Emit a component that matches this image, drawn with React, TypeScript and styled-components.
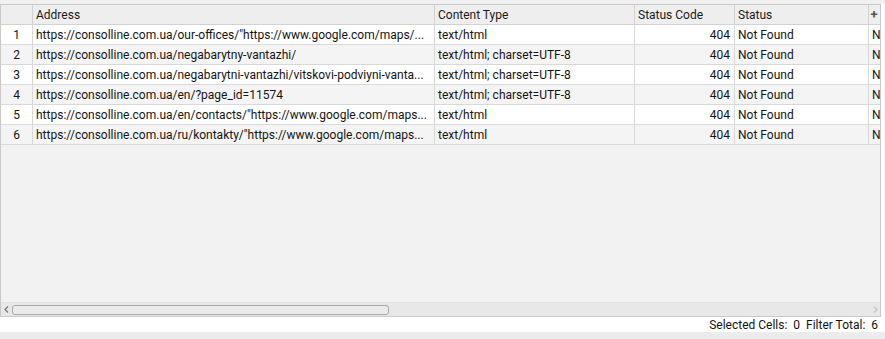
import React from "react";
import styled, { createGlobalStyle } from "styled-components";

const Global = createGlobalStyle`
  html, body { margin: 0; padding: 0; background: #ffffff; }
  body { font-family: Roboto, "Liberation Sans", Arial, sans-serif; font-size: 12px; color: #111; }
  #root { width: 885px; height: 339px; overflow: hidden; }
  * { box-sizing: border-box; }
`;

const Page = styled.div`
  width: 885px;
  height: 339px;
  display: flex;
  flex-direction: column;
  background: #ffffff;
`;

const TopStrip = styled.div`
  height: 4px;
  background: #f0f0f0;
  flex: none;
`;

const Panel = styled.div`
  width: 881px;
  height: 313px;
  border: 1px solid #c9c9c9;
  background: #f2f2f2;
  display: flex;
  flex-direction: column;
  flex: none;
  overflow: hidden;
`;

const Grid = styled.div`
  flex: 1;
  display: flex;
  flex-direction: column;
  min-height: 0;
`;

const cols = "32px 402px 200px 100px 134px minmax(0, 1fr)";

const HeaderRow = styled.div`
  display: grid;
  grid-template-columns: ${cols};
  height: 20px;
  border-bottom: 1px solid #d2d2d2;
  background: #eeeeee;
  flex: none;
`;

const HeaderCell = styled.div`
  border-right: 1px solid #d2d2d2;
  padding: 2px 4px 0 3px;
  line-height: 17px;
  white-space: nowrap;
  overflow: hidden;
  color: #1a1a1a;
  font-size: 12px;
`;

const PlusCell = styled.div`
  display: flex;
  align-items: center;
  justify-content: center;
  padding-right: 1px;
  color: #555;
  font-size: 13px;
  font-weight: 700;
`;

const Row = styled.div<{ $alt: boolean }>`
  display: grid;
  grid-template-columns: ${cols};
  height: 20px;
  border-bottom: 1px solid #d9d9d9;
  background: ${(p) => (p.$alt ? "#f4f4f4" : "#ffffff")};
  flex: none;
`;

const Cell = styled.div<{ $align?: "left" | "right" | "center"; $last?: boolean }>`
  border-right: ${(p) => (p.$last ? "none" : "1px solid #d9d9d9")};
  padding: ${(p) =>
    p.$align === "right" ? "2px 4px 0 3px" : p.$align === "center" ? "2px 0 0 0" : "2px 3px 0 3px"};
  text-align: ${(p) => p.$align ?? "left"};
  line-height: 17px;
  white-space: nowrap;
  overflow: hidden;
  color: #141414;
  font-size: 12px;
`;

const Empty = styled.div`
  flex: 1;
  background: #f2f2f2;
`;

const ScrollBar = styled.div`
  height: 14px;
  background: #e8e8e8;
  border-top: 1px solid #e4e4e4;
  display: flex;
  align-items: center;
  flex: none;
`;

const Arrow = styled.span<{ $right?: boolean }>`
  width: 10px;
  display: flex;
  align-items: center;
  justify-content: center;
  margin-left: ${(p) => (p.$right ? "auto" : "0")};
  margin-right: ${(p) => (p.$right ? "0" : "0")};
`;

const Thumb = styled.div`
  margin-left: 1px;
  width: 377px;
  height: 10px;
  border: 1px solid #a9a9a9;
  border-radius: 3px;
  background: #ebebeb;
`;

const StatusBar = styled.div`
  height: 15px;
  background: #ffffff;
  display: flex;
  justify-content: flex-end;
  align-items: center;
  padding-right: 7px;
  font-size: 12px;
  color: #141414;
  flex: none;
  white-space: pre;
`;

const BottomStrip = styled.div`
  flex: 1;
  background: #ececec;
`;

const rows = [
  ['https://consolline.com.ua/our-offices/"https://www.google.com/maps/...', "text/html"],
  ["https://consolline.com.ua/negabarytny-vantazhi/", "text/html; charset=UTF-8"],
  ["https://consolline.com.ua/negabarytni-vantazhi/vitskovi-podviyni-vanta...", "text/html; charset=UTF-8"],
  ["https://consolline.com.ua/en/?page_id=11574", "text/html; charset=UTF-8"],
  ['https://consolline.com.ua/en/contacts/"https://www.google.com/maps...', "text/html"],
  ['https://consolline.com.ua/ru/kontakty/"https://www.google.com/maps...', "text/html"],
];

const Chevron = ({ dir, color }: { dir: "left" | "right"; color: string }) => (
  <svg width="5" height="7" viewBox="0 0 5 7">
    <polyline
      points={dir === "left" ? "4,0.5 1,3.5 4,6.5" : "1,0.5 4,3.5 1,6.5"}
      fill="none"
      stroke={color}
      strokeWidth="1.2"
    />
  </svg>
);

export default function App() {
  return (
    <Page>
      <Global />
      <TopStrip />
      <Panel>
        <Grid>
          <HeaderRow>
            <HeaderCell />
            <HeaderCell>Address</HeaderCell>
            <HeaderCell>Content Type</HeaderCell>
            <HeaderCell>Status Code</HeaderCell>
            <HeaderCell>Status</HeaderCell>
            <PlusCell>+</PlusCell>
          </HeaderRow>
          {rows.map((r, i) => (
            <Row key={i} $alt={i % 2 === 1}>
              <Cell $align="center">{i + 1}</Cell>
              <Cell>{r[0]}</Cell>
              <Cell>{r[1]}</Cell>
              <Cell $align="right">404</Cell>
              <Cell>Not Found</Cell>
              <Cell $last>Non-Indexable</Cell>
            </Row>
          ))}
          <Empty />
        </Grid>
        <ScrollBar>
          <Arrow>
            <Chevron dir="left" color="#777" />
          </Arrow>
          <Thumb />
          <Arrow $right>
            <Chevron dir="right" color="#c4c4c4" />
          </Arrow>
        </ScrollBar>
      </Panel>
      <StatusBar>{"Selected Cells:  0  Filter Total:  6"}</StatusBar>
      <BottomStrip />
    </Page>
  );
}
